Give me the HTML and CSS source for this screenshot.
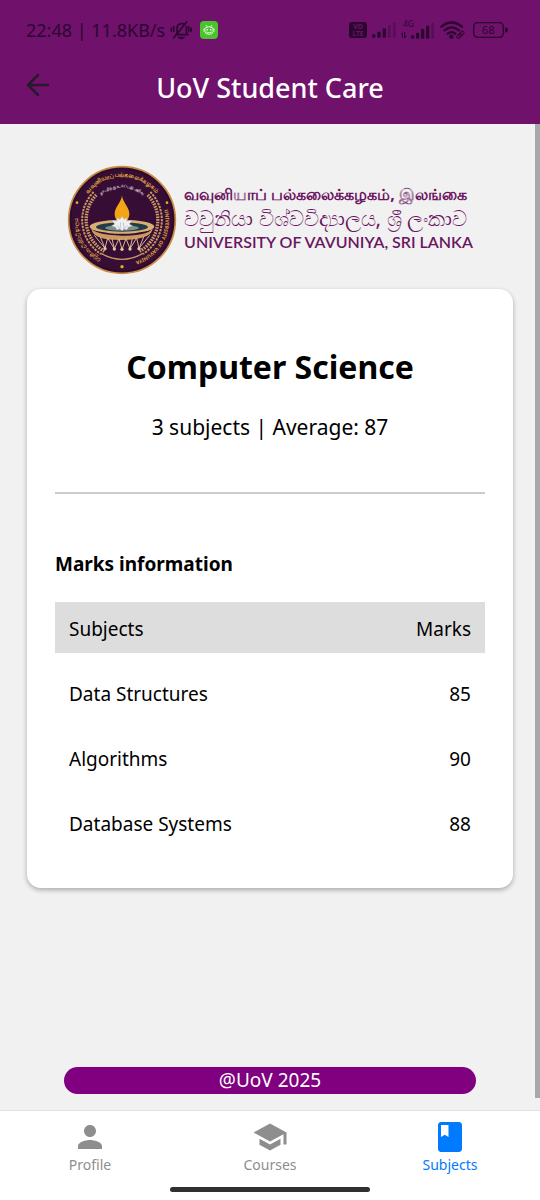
FILE: index.html
```html
<!DOCTYPE html>
<html lang="en">
<head>
<meta charset="utf-8">
<meta name="viewport" content="width=device-width, initial-scale=1">
<title>UoV Student Care</title>
<link rel="stylesheet" href="styles.css">
</head>
<body>
<header class="top">
  <div class="status">
    <div class="status-group">
      <span class="clock">22:48 | 11.8KB/s</span>
      <svg class="bell" viewBox="0 0 66 60" width="22" height="20" fill="none" stroke="currentColor" stroke-width="5" stroke-linecap="round">
        <path d="M17 44h37M21 40V26c0-8 6-14 13-15q7-1 10 3M49 20v17l5 7M11 53L50 6M4 24v10M11 20v14M56 20v14M63 24v10"/>
        <path d="M28 53q6 5 12 0z" fill="currentColor"/>
      </svg>
      <svg class="app" viewBox="0 0 54 54" width="18" height="18">
        <rect width="54" height="54" rx="12" fill="#4cc22e"/>
        <path d="M18 12l4 6M36 12l-4 6M15 21q12-8 24 0v11q0 8-12 8t-12-8zM12 23v9M42 23v9M19 33q8 5 16 0" fill="none" stroke="#d9f7cf" stroke-width="3"/>
        <circle cx="22" cy="26" r="2.500" fill="#d9f7cf"/><circle cx="32" cy="26" r="2.500" fill="#d9f7cf"/>
      </svg>
    </div>
    <div class="status-group">
      <svg class="volte" viewBox="0 0 54 48" width="18" height="16">
        <rect width="54" height="48" rx="9" fill="currentColor"/>
        <text x="27" y="21" text-anchor="middle">VO</text>
        <text x="27" y="41" text-anchor="middle">LTE</text>
      </svg>
      <svg viewBox="0 0 72 48" width="24" height="16" fill="currentColor">
        <rect y="37" width="10" height="10" rx="3"/><rect x="16" y="29" width="10" height="18" rx="3"/><rect x="32" y="19" width="10" height="28" rx="3"/>
        <rect x="48" y="10" width="8" height="37" rx="3" opacity=".35"/><rect x="63" y="1" width="8" height="46" rx="3" opacity=".35"/>
      </svg>
      <svg class="net" viewBox="0 0 102 54" width="34" height="18" fill="currentColor">
        <text x="6" y="19">4G</text>
        <path d="M0 40l6-7v17H3v-9zM9 33h4v12h5l-9 8z"/>
        <rect x="30" y="43" width="10" height="10" rx="3"/><rect x="45" y="35" width="10" height="18" rx="3"/><rect x="60" y="24" width="10" height="29" rx="3"/><rect x="75" y="14" width="10" height="39" rx="3"/>
        <rect x="91" y="5" width="8" height="48" rx="3" opacity=".35"/>
      </svg>
      <svg viewBox="0 0 75 54" width="25" height="18" fill="none" stroke="currentColor" stroke-width="7" stroke-linecap="round">
        <path d="M4 17q31-25 62 0M13 28q22-18 44 0M23 38q12-9 23 0"/>
        <circle cx="34" cy="47" r="3" fill="currentColor"/>
        <g transform="rotate(-45 61 41)" stroke-width="3"><rect x="48" y="37" width="16" height="9" rx="4"/><rect x="58" y="37" width="16" height="9" rx="4"/></g>
      </svg>
      <svg class="battery" viewBox="0 0 105 48" width="35" height="16">
        <rect x="2" y="2" width="89" height="44" rx="12" fill="none" stroke="currentColor" stroke-width="4"/>
        <path d="M96 16q9 1 9 8t-9 8z" fill="currentColor"/>
        <text x="46" y="36" text-anchor="middle">68</text>
      </svg>
    </div>
  </div>
  <div class="bar">
    <button class="back" aria-label="Back">
      <svg viewBox="0 0 24 24" width="24" height="24" fill="none" stroke="currentColor" stroke-width="2.500" stroke-linecap="round" stroke-linejoin="round"><path d="M22 12H3M12 2L2 12l10 10"/></svg>
    </button>
    <h1>UoV Student Care</h1>
  </div>
</header>

<main class="page">
  <div class="brand">
    <svg class="seal" viewBox="30 31 330 330" width="110" height="110">
      <defs>
        <path id="arc-top" d="M73 152A130 130 0 0 1 317 152"/>
        <path id="arc-motto" d="M120 133A98 98 0 0 1 270 133"/>
        <path id="arc-left" d="M155 323A133 133 0 0 1 66 165"/>
        <path id="arc-right" d="M319 155A131 131 0 0 1 225 323"/>
      </defs>
      <circle cx="195" cy="196" r="160" fill="#360d35" stroke="#c98d43" stroke-width="5"/>
      <circle cx="195" cy="196" r="154" fill="none" stroke="#1f0720" stroke-width="2"/>
      <g fill="none" stroke="#c79862">
        <path d="M118 121A108 108 0 0 0 142 290M272 121A108 108 0 0 1 248 290" stroke-width="10" stroke-dasharray="5 3"/>
        <path d="M110 112A120 120 0 0 0 132 298M280 112A120 120 0 0 1 258 298" stroke-width="6" stroke-dasharray="7 3"/>
        <path d="M132 296q31 18 63 18t63-18" stroke-width="4"/>
      </g>
      <g class="seal-text">
        <text><textPath href="#arc-top" startOffset="50%" text-anchor="middle">வவுனியாப் பல்கலைக்கழகம்</textPath></text>
        <text class="motto"><textPath href="#arc-motto" startOffset="50%" text-anchor="middle">நாடறிந்து உய்ப்பது அறிவு</textPath></text>
        <text class="left"><textPath href="#arc-left" startOffset="50%" text-anchor="middle">වවුනියා විශ්වවිද්‍යාලය</textPath></text>
        <text class="latin"><textPath href="#arc-right" startOffset="50%" text-anchor="middle">UNIVERSITY OF VAVUNIYA</textPath></text>
      </g>
      <g fill="#e8ad2e"><circle cx="60" cy="144" r="4"/><circle cx="330" cy="144" r="4"/><circle cx="195" cy="336" r="5"/></g>
      <path d="M101 215q5 27 94 28t94-28l-4 14q-10 26-90 27t-90-27z" fill="#c99b5e"/>
      <ellipse cx="195" cy="216" rx="97" ry="21" fill="#d9af74"/>
      <ellipse cx="195" cy="217" rx="78" ry="14" fill="#203d48"/>
      <ellipse cx="195" cy="220" rx="50" ry="8" fill="#7b918c"/>
      <path d="M112 242l32 39 8-31 20 32 14-30 9 32 12-32 12 30 20-32 7 31 32-39M144 281l-14-34M246 281l14-34M172 282l-7-30M219 282l7-30" fill="none" stroke="#d7b590" stroke-width="3"/>
      <g fill="#e5c6a2"><circle cx="144" cy="282" r="5"/><circle cx="172" cy="283" r="5"/><circle cx="195" cy="284" r="5"/><circle cx="219" cy="283" r="5"/><circle cx="246" cy="282" r="5"/></g>
      <path d="M195 122c1 20 22 36 22 55 0 16-9 26-22 28-13-2-22-12-22-28 0-19 21-35 22-55z" fill="#f2a515"/>
      <path d="M195 185l6 9 9-5-1 10 16-1-8 10 10 6-12 3-6 9-7-4-7 6-7-6-8 4-5-9-12-3 10-6-8-10 15 1 0-10 9 5z" fill="#eef0f1" stroke="#a9a6b5" stroke-width="1"/>
      <path d="M189 225l2-22M201 225l-2-22M178 212l9 8M212 212l-9 8" stroke="#b4b0c0" stroke-width="2"/>
    </svg>
    <div class="brand-names">
      <p class="tamil" lang="ta">வவுனியாப் பல்கலைக்கழகம், இலங்கை</p>
      <p class="sinhala" lang="si">වවුනියා විශ්වවිද්‍යාලය, ශ්‍රී ලංකාව</p>
      <p class="english">UNIVERSITY OF VAVUNIYA, SRI LANKA</p>
    </div>
  </div>

  <section class="card">
    <h2>Computer Science</h2>
    <p class="summary">3 subjects | Average: 87</p>
    <hr>
    <h3>Marks information</h3>
    <table class="marks">
      <thead><tr><th scope="col">Subjects</th><th scope="col">Marks</th></tr></thead>
      <tbody>
        <tr><td>Data Structures</td><td>85</td></tr>
        <tr><td>Algorithms</td><td>90</td></tr>
        <tr><td>Database Systems</td><td>88</td></tr>
      </tbody>
    </table>
  </section>

  <footer class="credit">@UoV 2025</footer>
  <div class="scroll-thumb"></div>
</main>

<nav class="tabs">
  <a href="#profile">
    <svg viewBox="0 0 24 24" width="36" height="36" fill="currentColor"><path d="M12 12c2.210 0 4-1.790 4-4s-1.790-4-4-4-4 1.790-4 4 1.790 4 4 4zm0 2c-2.670 0-8 1.340-8 4v2h16v-2c0-2.660-5.330-4-8-4z"/></svg>
    Profile
  </a>
  <a href="#courses">
    <svg viewBox="0 0 24 24" width="36" height="36" fill="currentColor"><path d="M5 13.180v4L12 21l7-3.820v-4L12 17l-7-3.820zM12 3L1 9l11 6 9-4.910V17h2V9L12 3z"/></svg>
    Courses
  </a>
  <a href="#subjects" class="active" aria-current="page">
    <svg viewBox="0 0 24 24" width="36" height="36" fill="currentColor"><path d="M18 2H6c-1.100 0-2 .9-2 2v16c0 1.100.9 2 2 2h12c1.100 0 2-.9 2-2V4c0-1.100-.9-2-2-2zM6 4h5v8l-2.500-1.500L6 12V4z"/></svg>
    Subjects
  </a>
  <div class="home-bar"></div>
</nav>
</body>
</html>
```
FILE: styles.css
```css
* { box-sizing: border-box; }

body {
  margin: 0;
  min-height: 100vh;
  display: flex;
  flex-direction: column;
  background: #f1f1f1;
  color: #000;
  font: 18px/24px "Noto Sans", sans-serif;
}

h1, h2, h3, p { margin: 0; }
svg { display: block; flex: none; overflow: visible; }

.top {
  background: #70116c;
  padding: 18px 26px 16px;
}

.status {
  display: flex;
  justify-content: space-between;
  align-items: center;
  height: 24px;
  padding-right: 6px;
  color: #2b0730;
}
.status-group { display: flex; align-items: center; gap: 5px; }
.clock { font-size: 18px; }
.app { margin-left: 3px; }
.volte text { fill: #70116c; font: bold 20px "Noto Sans", sans-serif; }
.net text { font: 25px "Noto Sans", sans-serif; }
.battery { margin-left: 3px; }
.battery text { fill: currentColor; font: 34px "Noto Sans", sans-serif; }

.bar {
  display: grid;
  grid-template-columns: 26px 1fr 26px;
  align-items: center;
  margin-top: 26px;
  height: 40px;
}
.back { padding: 0 0 6px; border: 0; background: none; color: #281a2b; }
h1 {
  color: #fff;
  font-size: 27px;
  line-height: 40px;
  font-weight: 500;
  text-align: center;
}

.page {
  position: relative;
  flex: 1;
  display: flex;
  flex-direction: column;
  padding: 41px 27px 16px;
}
.scroll-thumb {
  position: absolute;
  top: 0;
  right: 0;
  bottom: 12px;
  width: 5px;
  background: #a8a8a8;
}

.brand {
  display: flex;
  justify-content: center;
  align-items: center;
  gap: 7px;
  height: 110px;
}
.brand-names { padding-bottom: 5px; color: #6b1560; white-space: nowrap; }
.tamil { font-size: 16px; font-weight: 700; }
.sinhala { font-size: 21px; }
.english { font: 600 16px/24px Lato, sans-serif; }
.seal-text { fill: #e0a83c; font: bold 18px "Noto Sans", sans-serif; }
.seal-text .motto { fill: #c9bbc4; font-size: 12px; }
.seal-text .left { font-size: 16px; }
.seal-text .latin { font-size: 15px; }

.card {
  margin-top: 14px;
  padding: 56px 28px 26px;
  border-radius: 14px;
  background: #fff;
  box-shadow: 0 2px 5px rgba(0, 0, 0, .3);
}
h2 { font-size: 32px; line-height: 44px; text-align: center; }
.summary { margin-top: 26px; font-size: 21px; text-align: center; }
hr { margin: 53px 0 0; border: 0; border-top: 2px solid #ccc; }
h3 { margin-top: 58px; font-size: 19px; line-height: 24px; }

.marks {
  width: 100%;
  margin-top: 12px;
  border-collapse: separate;
  border-spacing: 0 14px;
}
.marks th, .marks td {
  height: 51px;
  padding: 2px 14px 0;
  font-size: 19px;
  font-weight: 400;
  text-align: left;
}
.marks th { background: #ddd; }
.marks th:last-child, .marks td:last-child { text-align: right; }

.credit {
  margin: auto 37px 0;
  border-radius: 14px;
  background: #800080;
  color: #fff;
  font-size: 19px;
  line-height: 27px;
  text-align: center;
}

.tabs {
  display: grid;
  grid-template-columns: repeat(3, 1fr);
  padding: 8px 0;
  border-top: 1px solid #e2e2e2;
  background: #fff;
}
.tabs a {
  display: flex;
  flex-direction: column;
  align-items: center;
  color: #8e8e8e;
  font-size: 14px;
  line-height: 20px;
  text-decoration: none;
}
.tabs .active { color: #007aff; }
.home-bar {
  grid-column: 1 / -1;
  justify-self: center;
  width: 37%;
  height: 5px;
  margin-top: 12px;
  border-radius: 3px;
  background: #303030;
}
```
